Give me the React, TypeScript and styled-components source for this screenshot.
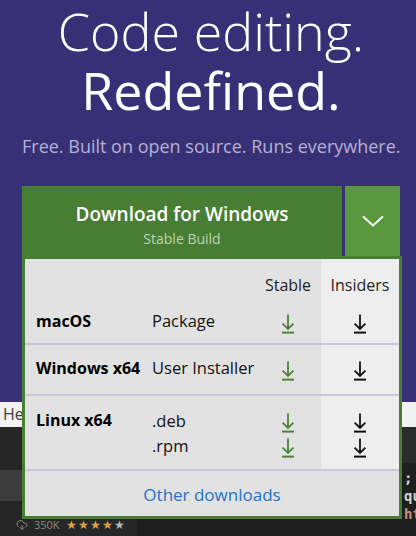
import React from "react";
import styled, { createGlobalStyle } from "styled-components";
import { CloudDownload } from "lucide-react";

const GlobalStyle = createGlobalStyle`
  html, body { margin: 0; padding: 0; }
  body {
    font-family: "Open Sans", "Noto Sans", sans-serif;
    background: #1e1e1e;
    width: 416px;
    height: 536px;
    overflow: hidden;
  }
  * { box-sizing: border-box; }
`;

const Page = styled.div`
  width: 416px;
  height: 536px;
  overflow: hidden;
  display: flex;
  flex-direction: column;
`;

const Hero = styled.section`
  position: relative;
  z-index: 2;
  flex: 0 0 402px;
  height: 402px;
  background: #383076;
  padding: 1px 16px 0 22px;
  display: flex;
  flex-direction: column;
`;

const Title = styled.h1`
  margin: 0;
  text-align: center;
  color: #ffffff;
  font-size: 52px;
  line-height: 59px;
  font-weight: 300;
  white-space: nowrap;
`;

const TitleStrong = styled.span`
  display: block;
  font-weight: 400;
`;

const Tagline = styled.p`
  margin: 15px 0 0;
  text-align: center;
  color: #b6b1d3;
  font-size: 18px;
  letter-spacing: 0;
  line-height: 24px;
  white-space: nowrap;
`;

const DownloadGroup = styled.div`
  position: relative;
  margin-top: 28px;
  height: 70px;
  display: flex;
  gap: 3px;
`;

const MainButton = styled.button`
  flex: 1;
  border: none;
  margin: 0;
  padding: 15px 0 0;
  background: #487d34;
  color: #ffffff;
  font-family: inherit;
  display: flex;
  flex-direction: column;
  align-items: center;
  cursor: pointer;
`;

const ButtonLabel = styled.span`
  font-size: 19px;
  line-height: 26px;
  font-weight: 600;
  white-space: nowrap;
`;

const ButtonSub = styled.span`
  margin-top: 2px;
  font-size: 14px;
  line-height: 20px;
  color: #bed4b0;
  white-space: nowrap;
`;

const ToggleButton = styled.button`
  flex: 0 0 55px;
  border: none;
  margin: 0;
  padding: 0;
  background: #59983e;
  display: flex;
  align-items: center;
  justify-content: center;
  cursor: pointer;
`;

const Dropdown = styled.div`
  position: absolute;
  top: 100%;
  left: 0;
  width: 380px;
  height: 263px;
  border: 3px solid #487d34;
  background: #e2e2e2;
  display: flex;
  flex-direction: column;
`;

const Row = styled.div<{ $h: number; $pt: number; $line?: boolean }>`
  flex: 0 0 auto;
  display: grid;
  grid-template-columns: 127px 103px 66px 78px;
  box-sizing: content-box;
  height: ${(p) => p.$h}px;
  border-bottom: ${(p) => (p.$line ? "2px solid #c8c6d8" : "none")};
  & > * {
    padding-top: ${(p) => p.$pt}px;
  }
`;

const Cell = styled.div<{ $light?: boolean; $center?: boolean }>`
  background: ${(p) => (p.$light ? "#eeeeee" : "transparent")};
  display: flex;
  flex-direction: column;
  align-items: ${(p) => (p.$center ? "center" : "flex-start")};
`;

const HeadText = styled.span`
  font-size: 16px;
  line-height: 24px;
  color: #1e1e1e;
  white-space: nowrap;
`;

const OsLabel = styled.span`
  padding-left: 11px;
  font-size: 16px;
  line-height: 24px;
  font-weight: 700;
  color: #000000;
  white-space: nowrap;
`;

const PkgText = styled.span<{ $lh: number }>`
  font-size: 16.5px;
  line-height: ${(p) => p.$lh}px;
  color: #111111;
  white-space: nowrap;
`;

const ArrowSlot = styled.a<{ $lh: number }>`
  display: flex;
  justify-content: center;
  height: ${(p) => p.$lh}px;
  padding-top: 5px;
`;

const Footer = styled.div`
  flex: 1;
  padding-top: 12px;
  text-align: center;
`;

const OtherLink = styled.a`
  font-size: 17px;
  line-height: 24px;
  color: #1f72c4;
  text-decoration: none;
  white-space: nowrap;
`;

const AddressBar = styled.div`
  flex: 0 0 25px;
  height: 25px;
  background: #f2f2f2;
  color: #3d3d3d;
  font-size: 16px;
  line-height: 25px;
  padding-left: 3px;
`;

const Editor = styled.div`
  flex: 0 0 109px;
  height: 109px;
  display: grid;
  grid-template-columns: 137px 1fr;
`;

const Sidebar = styled.div`
  display: flex;
  flex-direction: column;
  background: #262626;
`;

const SideItem = styled.div<{ $h?: number; $active?: boolean }>`
  flex: ${(p) => (p.$h ? `0 0 ${p.$h}px` : "1")};
  background: ${(p) => (p.$active ? "#3c3c3c" : "#262626")};
`;

const Stats = styled.div`
  display: flex;
  align-items: center;
  gap: 6px;
  padding: 17px 0 0 16px;
  font-size: 11px;
  line-height: 14px;
  color: #8a8a8a;
`;

const Stars = styled.span`
  color: #e0a33b;
  font-size: 12px;
  letter-spacing: 1px;
`;

const DimStar = styled.span`
  color: #b8b8b8;
`;

const Main = styled.div`
  display: flex;
  flex-direction: column;
  background: #1e1e1e;
`;

const TabBar = styled.div`
  flex: 0 0 36px;
  height: 36px;
  background: #2a2a2a;
`;

const Code = styled.div`
  padding: 6px 0 0 267px;
  font-family: "DejaVu Sans Mono", monospace;
  font-size: 14px;
  line-height: 18px;
  font-weight: 700;
  white-space: nowrap;
`;

const CodeLine = styled.div<{ $c: string }>`
  height: 18px;
  color: ${(p) => p.$c};
`;

const DownloadIcon = ({ color }: { color: string }) => (
  <svg width="14" height="20" viewBox="0 0 14 20" fill="none" stroke={color}>
    <path d="M7 0.5V15" strokeWidth="1.8" />
    <path d="M1.6 9.6L7 15L12.4 9.6" strokeWidth="1.8" />
    <path d="M1 18.6H13" strokeWidth="2" />
  </svg>
);

const Chevron = () => (
  <svg width="22" height="12" viewBox="0 0 22 12" fill="none">
    <path d="M1 1.5L11 10.5L21 1.5" stroke="#ffffff" strokeWidth="2" />
  </svg>
);

type Platform = { os: string; pkgs: string[]; h: number; pt: number; lh: number };

const platforms: Platform[] = [
  { os: "macOS", pkgs: ["Package"], h: 44, pt: 10, lh: 24 },
  { os: "Windows x64", pkgs: ["User Installer"], h: 49, pt: 11, lh: 24 },
  { os: "Linux x64", pkgs: [".deb", ".rpm"], h: 73, pt: 12, lh: 25 },
];

export default function App() {
  return (
    <>
      <GlobalStyle />
      <Page>
        <Hero>
          <Title>
            Code editing.
            <TitleStrong>Redefined.</TitleStrong>
          </Title>
          <Tagline>Free. Built on open source. Runs everywhere.</Tagline>
          <DownloadGroup>
            <MainButton>
              <ButtonLabel>Download for Windows</ButtonLabel>
              <ButtonSub>Stable Build</ButtonSub>
            </MainButton>
            <ToggleButton aria-label="More downloads">
              <Chevron />
            </ToggleButton>
            <Dropdown>
              <Row $h={40} $pt={14}>
                <Cell />
                <Cell />
                <Cell $center>
                  <HeadText>Stable</HeadText>
                </Cell>
                <Cell $center $light>
                  <HeadText>Insiders</HeadText>
                </Cell>
              </Row>
              {platforms.map((p) => (
                <Row key={p.os} $h={p.h} $pt={p.pt} $line>
                  <Cell>
                    <OsLabel>{p.os}</OsLabel>
                  </Cell>
                  <Cell>
                    {p.pkgs.map((k) => (
                      <PkgText key={k} $lh={p.lh}>
                        {k}
                      </PkgText>
                    ))}
                  </Cell>
                  <Cell $center>
                    {p.pkgs.map((k) => (
                      <ArrowSlot key={k} $lh={p.lh}>
                        <DownloadIcon color="#4b8338" />
                      </ArrowSlot>
                    ))}
                  </Cell>
                  <Cell $center $light>
                    {p.pkgs.map((k) => (
                      <ArrowSlot key={k} $lh={p.lh}>
                        <DownloadIcon color="#111111" />
                      </ArrowSlot>
                    ))}
                  </Cell>
                </Row>
              ))}
              <Footer>
                <OtherLink>Other downloads</OtherLink>
              </Footer>
            </Dropdown>
          </DownloadGroup>
        </Hero>
        <AddressBar>He</AddressBar>
        <Editor>
          <Sidebar>
            <SideItem $h={43} />
            <SideItem $h={31} $active />
            <SideItem>
              <Stats>
                <CloudDownload size={12} color="#8a8a8a" />
                <span>350K</span>
                <Stars>
                  ★★★★<DimStar>★</DimStar>
                </Stars>
              </Stats>
            </SideItem>
          </Sidebar>
          <Main>
            <TabBar />
            <Code>
              <CodeLine $c="#d4d4d4">;</CodeLine>
              <CodeLine $c="#d4d4d4">quire</CodeLine>
              <CodeLine $c="#ce9178">http</CodeLine>
            </Code>
          </Main>
        </Editor>
      </Page>
    </>
  );
}
